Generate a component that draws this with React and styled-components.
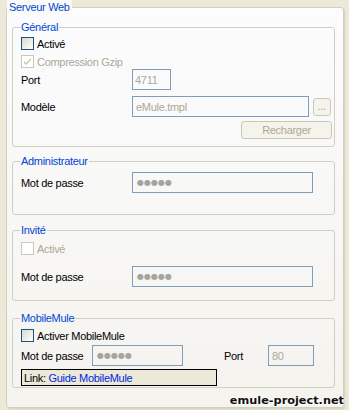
import React from 'react';
import styled, { createGlobalStyle } from 'styled-components';

const Global = createGlobalStyle`
  html, body { margin: 0; padding: 0; background: #ece9d8; }
  body {
    font-family: "Liberation Sans", Arial, sans-serif;
    font-size: 11px;
    letter-spacing: -0.3px;
    color: #000;
  }
  * { box-sizing: border-box; }
`;

const Page = styled.div`
  position: relative;
  width: 349px;
  height: 410px;
  overflow: hidden;
  background: #ece9d8;
`;

const Outer = styled.fieldset`
  margin: 0 0 0 6px;
  padding: 0;
  width: 338px;
  height: 408px;
  min-width: 0;
  border: 1px solid #d0d0bf;
  border-radius: 3px;
  background: linear-gradient(#fcfcfe, #f4f3ee);
  box-shadow: 1px 1px 0 #d9d6c6, 2px 2px 0 #e3e0d0;
`;

const OuterLegend = styled.legend`
  margin: 0;
  padding: 0 2px;
  height: 15px;
  line-height: 15px;
  color: #0046d5;
  background: #fafaf8;
`;

const Stack = styled.div`
  display: flex;
  flex-direction: column;
  align-items: flex-start;
`;

const Group = styled.fieldset`
  margin: ${p => p.$mt}px 0 0 5px;
  padding: 0 2px ${p => p.$pb}px 8px;
  width: 323px;
  min-width: 0;
  border: 1px solid #d0d0bf;
  border-radius: 3px;
`;

const Legend = styled.legend`
  margin-left: -1px;
  padding: 0 1px;
  height: 13px;
  line-height: 13px;
  color: #0046d5;
`;

const CheckRow = styled.div`
  display: flex;
  align-items: center;
  height: 13px;
  margin-top: ${p => p.$mt}px;
  color: ${p => (p.$disabled ? '#aca899' : '#000')};
`;

const Box = styled.span`
  flex: none;
  width: 13px;
  height: 13px;
  margin-right: 3px;
  border: 1px solid ${p => (p.$disabled ? '#cac8bb' : '#1c5180')};
  background: ${p => (p.$disabled ? '#fff' : 'linear-gradient(135deg, #d8d8d2 0%, #f4f4f0 70%, #fff 100%)')};
  display: flex;
  align-items: center;
  justify-content: center;
`;

const FieldRow = styled.div`
  display: flex;
  align-items: center;
  margin-top: ${p => p.$mt}px;
`;

const Label = styled.span`
  flex: none;
  width: ${p => p.$w}px;
  margin-left: ${p => p.$ml || 0}px;
`;

const Field = styled.div`
  flex: none;
  width: ${p => p.$w}px;
  height: 21px;
  padding: 0 ${p => p.$pl || 3}px;
  border: 1px solid #7f9db9;
  display: flex;
  align-items: center;
  color: #aca899;
  white-space: nowrap;
  overflow: hidden;
`;

const Dots = styled.span`
  font-family: "DejaVu Sans", sans-serif;
  font-size: 8px;
  letter-spacing: 0;
  color: #a4a4a0;
  padding-left: 1px;
`;

const Btn = styled.button`
  flex: none;
  width: ${p => p.$w}px;
  height: ${p => p.$h}px;
  margin-left: ${p => p.$ml || 0}px;
  padding: 0;
  border: 1px solid #cac8bb;
  border-radius: 3px;
  background: #f5f4ea;
  color: #aca899;
  font: inherit;
  letter-spacing: inherit;
  line-height: 1;
`;

const ButtonRow = styled.div`
  display: flex;
  justify-content: flex-end;
  margin-top: ${p => p.$mt}px;
`;

const LinkBox = styled.div`
  width: 196px;
  height: 17px;
  margin-top: 3px;
  padding-left: 2px;
  border: 1px solid #000;
  background: #ece9d8;
  display: flex;
  align-items: center;
  white-space: pre;
`;

const LinkText = styled.span`
  color: #0026e0;
`;

const Watermark = styled.div`
  position: absolute;
  right: 5px;
  bottom: 3px;
  font-family: "DejaVu Sans", Verdana, sans-serif;
  font-weight: bold;
  font-size: 11.3px;
  letter-spacing: 0;
  color: #111;
  text-shadow: 0 0 2px #fff, 0 0 2px #fff, 1px 1px 1px #fff;
`;

const Check = ({ color }) => (
  <svg width="9" height="9" viewBox="0 0 9 9">
    <path d="M1 4 L3 6 L8 1 L8 3 L3 8 L1 6 Z" fill={color} />
  </svg>
);

const Checkbox = ({ label, disabled, checked, mt }) => (
  <CheckRow $mt={mt} $disabled={disabled}>
    <Box $disabled={disabled}>{checked && <Check color="#cac8bb" />}</Box>
    {label}
  </CheckRow>
);

export default function App() {
  return (
    <Page>
      <Global />
      <Outer>
        <OuterLegend>Serveur Web</OuterLegend>
        <Stack>
          <Group $mt={6} $pb={7}>
            <Legend>Général</Legend>
            <Checkbox mt={3} label="Activé" />
            <Checkbox mt={5} label="Compression Gzip" disabled checked />
            <FieldRow $mt={1}>
              <Label $w={111}>Port</Label>
              <Field $w={39} $pl={2}>4711</Field>
            </FieldRow>
            <FieldRow $mt={6}>
              <Label $w={111}>Modèle</Label>
              <Field $w={177}>eMule.tmpl</Field>
              <Btn $w={18} $h={18} $ml={4}>...</Btn>
            </FieldRow>
            <ButtonRow $mt={4}>
              <Btn $w={91} $h={18}>Recharger</Btn>
            </ButtonRow>
          </Group>

          <Group $mt={8} $pb={21}>
            <Legend>Administrateur</Legend>
            <FieldRow $mt={4}>
              <Label $w={111}>Mot de passe</Label>
              <Field $w={181}><Dots>●●●●●</Dots></Field>
            </FieldRow>
          </Group>

          <Group $mt={9} $pb={13}>
            <Legend>Invité</Legend>
            <Checkbox mt={5} label="Activé" disabled />
            <FieldRow $mt={11}>
              <Label $w={111}>Mot de passe</Label>
              <Field $w={181}><Dots>●●●●●</Dots></Field>
            </FieldRow>
          </Group>

          <Group $mt={11} $pb={1}>
            <Legend>MobileMule</Legend>
            <Checkbox mt={4} label="Activer MobileMule" />
            <FieldRow $mt={3}>
              <Label $w={71}>Mot de passe</Label>
              <Field $w={91}><Dots>●●●●●</Dots></Field>
              <Label $w={44} $ml={41}>Port</Label>
              <Field $w={46}>80</Field>
            </FieldRow>
            <LinkBox>
              Link: <LinkText>Guide MobileMule</LinkText>
            </LinkBox>
          </Group>
        </Stack>
      </Outer>
      <Watermark>emule-project.net</Watermark>
    </Page>
  );
}
